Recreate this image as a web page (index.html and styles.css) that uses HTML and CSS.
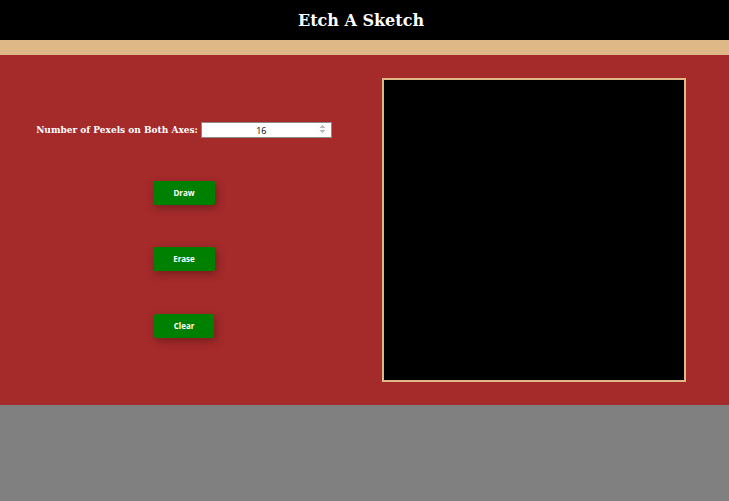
FILE: index.html
```html
<!DOCTYPE html>
<html>
<head>
<meta charset="utf-8">
<title>Etch A Sketch</title>
<link rel="stylesheet" href="styles.css">
</head>
<body>
<header class="top">
  <h1 class="title">Etch A Sketch</h1>
</header>
<div class="stripe"></div>
<main class="board">
  <section class="controls">
    <div class="field">
      <label class="label" for="size">Number of Pexels on Both Axes:</label>
      <input class="size-input" id="size" type="number" value="16">
    </div>
    <div class="buttons">
      <button class="btn">Draw</button>
      <button class="btn">Erase</button>
      <button class="btn btn-clear">Clear</button>
    </div>
  </section>
  <section class="canvas-wrap">
    <div class="canvas"></div>
  </section>
</main>
</body>
</html>
```
FILE: styles.css
```css
html, body {
  margin: 0;
  padding: 0;
  background: #808080;
}
.top {
  background: #000;
  height: 40px;
  display: flex;
  align-items: center;
  justify-content: center;
  padding-right: 7px;
}
.title {
  margin: 0;
  color: #fff;
  font-family: "DejaVu Serif", serif;
  font-weight: bold;
  font-size: 16px;
}
.stripe {
  height: 15px;
  background: #deb887;
}
.board {
  background: #a52a2a;
  display: flex;
  padding: 23px 0 23px 36px;
  gap: 50px;
}
.controls {
  width: 296px;
  display: flex;
  flex-direction: column;
  align-items: center;
  padding-top: 44px;
}
.field {
  display: flex;
  align-items: center;
  gap: 3px;
  height: 16px;
}
.label {
  color: #fff;
  font-family: "DejaVu Serif", serif;
  font-weight: bold;
  font-size: 9px;
  white-space: nowrap;
}
.size-input {
  box-sizing: border-box;
  width: 131px;
  height: 16px;
  margin: 0;
  padding: 0 1px 0 6px;
  border: 1px solid #8a8a8a;
  background: #fff;
  font-family: "Open Sans", sans-serif;
  font-size: 9px;
  text-align: center;
  color: #000;
}
.size-input::-webkit-inner-spin-button {
  opacity: 0.6;
  width: 8px;
  height: 11px;
}
.buttons {
  display: flex;
  flex-direction: column;
  align-items: center;
  gap: 42px;
  margin-top: 43px;
}
.btn {
  width: 62px;
  height: 24px;
  border: none;
  border-radius: 2px;
  background: #008000;
  color: #fff;
  font-family: "Open Sans", sans-serif;
  font-weight: bold;
  font-size: 8px;
  line-height: 23px;
  box-shadow: 2px 3px 8px rgba(0, 0, 0, 0.3);
  padding: 0 0 1px;
}
.btn-clear {
  width: 60px;
  margin-top: 1px;
}
.canvas {
  box-sizing: border-box;
  width: 304px;
  height: 304px;
  border: 2px solid #deb887;
  background: #000;
}
```
